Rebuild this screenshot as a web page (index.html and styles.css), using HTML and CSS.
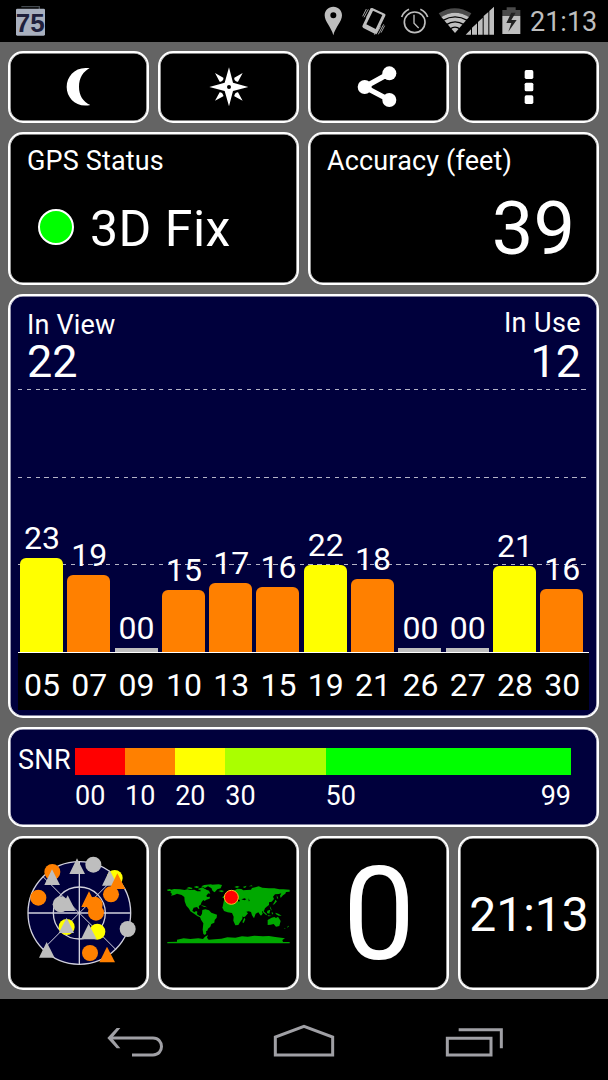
FILE: index.html
```
<!DOCTYPE html>
<html lang="en">
	<head>
		<meta charset="utf-8" />
		<meta name="viewport" content="width=device-width, initial-scale=1.0" />
		<title>GPS Status</title>
		<link rel="stylesheet" href="styles.css">
	</head>
	<body>
		<header class="statusbar">
			<svg class="battery-badge" viewBox="45 15 93 93">
				<path d="M64 20h54v8" fill="none" stroke="#444a50" stroke-width="4"/>
				<rect x="48" y="26" width="87" height="81" rx="4" fill="#a9b0bf"/>
				<text x="91" y="95">75</text>
			</svg>
			<div class="tray">
				<svg class="pin" viewBox="60 18 57 90"><path fill-rule="evenodd" d="M88 20c-15 0-26 11-26 26 0 19 20 36 26 60 6-24 26-41 26-60 0-15-11-26-26-26zm0 17a9 9 0 1 1 0 18 9 9 0 0 1 0-18z"/></svg>
				<svg class="vibrate" viewBox="171 18 78 90"><path fill-rule="evenodd" d="M205 24l37 17q4 2 2 6l-24 50q-3 6-8 4l-34-17q-5-3-2-8l23-48q2-5 6-4zm2 8l-20 41 28 14 20-42z"/><path class="line" d="M180 52l13-24M187 53l15-29M176 49l11-22M216 103l14-24M223 103l16-30M211 104l9-16M231 98l11-21" stroke-width="2.5"/></svg>
				<svg class="alarm" viewBox="291 18 84 90"><circle class="line" cx="332" cy="67" r="31" stroke-width="5"/><path class="line" d="M330 44v26l14 14" stroke-width="4"/><path class="line" d="M293 51q6-16 22-23M371 51q-6-16-22-23" stroke-width="5"/></svg>
				<svg class="network" viewBox="402 18 171 90">
					<path class="dim" d="M404 40q48-31 98 0l-7 11q-42-26-83 0z"/>
					<path d="M412 51q41-26 83 0l-42 48z"/>
					<path class="gap" d="M417 61q36-21 73 0M427 74q26-17 53 0M438 87q15-11 30 0" stroke-width="4"/>
					<path d="M481 108L573 19v89z" fill="#000"/>
					<path d="M485 104l16-16v16zM504 104V83l15-13v34zM522 104V66l14-13v51zM539 104V48l14-12v68zM556 104V33l14-13v84z"/>
				</svg>
				<svg class="battery" viewBox="594 18 57 90"><path class="dim" d="M608 22h27v8h14v18h-54V30h13z"/><path d="M595 48h54v54h-54z"/><path d="M622 38l-15 31h15l-9 26 25-35h-16l13-22z" fill="#222"/></svg>
				<span class="clock">21:13</span>
			</div>
		</header>

		<main class="board">
			<button class="tile tool"><svg viewBox="195 198 84 126"><path d="M269 205c-42-7-69 23-69 56s29 63 71 54c-22-10-34-29-34-55s13-46 32-55z"/></svg></button>
			<button class="tile tool"><svg viewBox="624 198 126 126"><path fill-rule="evenodd" d="M687 202l12 46 46 13-46 12-12 46-13-46-46-12 46-13zm0 53a6 6 0 1 0 0 12 6 6 0 0 0 0-12z"/><path d="M645 219l25 14q2 8-8 12h-3zM728 219l-25 14q-2 8 8 12h3zM645 302l14-25q8-1 11 9v3zM728 302l-14-25q-8-1-11 9v3z"/></svg></button>
			<button class="tile tool"><svg viewBox="160 198 126 126"><path class="arm" d="M254 220l-74 41 74 39"/><circle cx="254" cy="220" r="21"/><circle cx="180" cy="261" r="21"/><circle cx="254" cy="300" r="21"/></svg></button>
			<button class="tile tool"><svg viewBox="611 198 126 126"><rect x="661" y="210" width="26" height="27" rx="5"/><rect x="661" y="248" width="26" height="26" rx="5"/><rect x="661" y="286" width="26" height="26" rx="5"/></svg></button>

			<section class="tile half">
				<h2>GPS Status</h2>
				<p class="fix"><i class="led"></i>3D Fix</p>
			</section>
			<section class="tile half">
				<h2>Accuracy (feet)</h2>
				<p class="accuracy">39</p>
			</section>

			<section class="tile wide sky">
				<div class="counts">
					<div><h2>In View</h2><b>22</b></div>
					<div class="used"><h2>In Use</h2><b>12</b></div>
				</div>
				<div class="plot">
					<div class="sat"><span>23</span><i class="bar y" style="height:94px"></i></div>
					<div class="sat"><span>19</span><i class="bar o" style="height:77px"></i></div>
					<div class="sat"><span>00</span><i class="bar none" style="height:4px"></i></div>
					<div class="sat"><span>15</span><i class="bar o" style="height:62px"></i></div>
					<div class="sat"><span>17</span><i class="bar o" style="height:69px"></i></div>
					<div class="sat"><span>16</span><i class="bar o" style="height:65px"></i></div>
					<div class="sat"><span>22</span><i class="bar y" style="height:87px"></i></div>
					<div class="sat"><span>18</span><i class="bar o" style="height:73px"></i></div>
					<div class="sat"><span>00</span><i class="bar none" style="height:4px"></i></div>
					<div class="sat"><span>00</span><i class="bar none" style="height:4px"></i></div>
					<div class="sat"><span>21</span><i class="bar y" style="height:86px"></i></div>
					<div class="sat"><span>16</span><i class="bar o" style="height:63px"></i></div>
				</div>
				<div class="ids">
					<span>05</span><span>07</span><span>09</span><span>10</span><span>13</span><span>15</span><span>19</span><span>21</span><span>26</span><span>27</span><span>28</span><span>30</span>
				</div>
			</section>

			<section class="tile wide snr">
				<span class="name">SNR</span>
				<div class="scale">
					<div class="step r">00</div>
					<div class="step o">10</div>
					<div class="step y">20</div>
					<div class="step l">30</div>
					<div class="step g">50<span>99</span></div>
				</div>
			</section>

			<section class="tile widget">
				<svg class="radar" viewBox="-4 -6 420 450">
					<circle cx="207" cy="219" r="154" fill="#00003c"/>
					<g class="rings">
						<circle cx="207" cy="219" r="154"/><circle cx="207" cy="219" r="78"/>
						<path d="M98 110l218 218M98 328l218-218" stroke-width="3"/>
						<path d="M53 219h308M207 65v308"/>
					</g>
					<g class="o"><circle cx="126" cy="96" r="24"/><circle cx="84" cy="173" r="24"/></g>
					<path class="none" d="M200 55l24 47h-47zM125 88l24 47h-47z"/>
					<circle class="none" cx="249" cy="74" r="24"/>
					<circle class="y" cx="313" cy="114" r="24"/>
					<path class="none" d="M298 90l24 47h-47z"/>
					<g class="o"><circle cx="302" cy="163" r="24"/><path d="M321 100l24 47h-47zM236 154l24 47h-47z"/><circle cx="253" cy="194" r="24"/><circle cx="257" cy="218" r="24"/></g>
					<circle class="none" cx="151" cy="193" r="24"/><path class="none" d="M172 166l24 47h-47z"/>
					<circle class="y" cx="169" cy="261" r="24"/><path class="none" d="M169 233l22 46h-46z"/>
					<circle class="y" cx="261" cy="275" r="24"/><path class="none" d="M235 251l24 47h-47z"/>
					<circle class="none" cx="352" cy="267" r="24"/><path class="none" d="M109 306l24 47h-47z"/>
					<g class="o"><circle cx="239" cy="339" r="24"/><path d="M290 320l24 47h-47z"/></g>
				</svg>
			</section>
			<section class="tile widget">
				<svg class="world" viewBox="3 2 435 255">
					<!-- north america and greenland -->
					<path d="M36 58l8-2 5 2 8-2 18 1 14 2 8-2 9 2 12-1 9 5 10 0-2-9 7-3 12 8 6 10-6 7 2 4 9-1-1 6-10 3-5 4-4-3-5 6-3 8-6 4 2 9-3-1-4-5-10 2-4 9 6 5 5-4 4 2-1 8 8 5 7 1-2 4-11-4-13-9-9-6-4-8-8-9-5-13-1-13-8-6-14-4-8 4-10 2 3-5-5-5 2-4-10 0z"/>
					<path d="M94 54l8-4 11 3-4 4zM116 50l9-3 8 3-7 4zM128 56l8-3 5 3-7 3zM139 48l9-4 20-2 5 2-14 4-9 5zM158 47l12-4 21-1 10 2-4 10-10 3-8 9-6-4-4-9-5-2zM190 62l9-2 8 2-6 4zM148 56l14 5 4 9-7-1-8-6zM137 104l12 3 7 4-10-2z"/>
					<!-- south america -->
					<path d="M142 119l9-2 11 3 7 7 17 6-1 9-6 7-1 8-9 4-3 8-7 6-2 6-4 2 1 6-4 5-5-3-2-13 2-19-7-11-3-8 6-10z"/>
					<!-- europe and asia -->
					<path d="M207 90l12-1-1-7 8-7 9-3 0-10 12-7 12 1 6 4 9-1 14-1 3-5 10-2 10-3 11 4 20 2 16 0 15 3 12 0 19 1v6l-11 1-2 5-7 5-7 8-2-7 4-7-8 2-11 1-6 7 3 7-7 8-8 2 0 8-7 5-5 5-3 7-6 2 2 7-5 6-3-3-5-7-8 4-5 14-6-9-3-10-7-2-7 1 5 5-9 10-6 1-8-15-3-8-9-2-7 2-4-7-7-4-9 3-8 5-7 0z"/>
					<path d="M211 73l7 5-1 5-7 1zM205 77l4 2-3 5-4-2zM238 50l8-3 8 2-8 4zM263 50l12-4-5 7zM281 48l9-3 3 3zM365 75l5 9-4 1z"/>
					<path d="M361 88l5 5-8 9-5 1 5-7z"/>
					<!-- africa -->
					<path d="M210 99l9-5 15 0 5 5 13 1 7 11 5 9 11-1-4 9-8 8-1 10-7 10-5 8-9 1-6-14 1-12-5-11-13-2-11-4-4-9 2-8zM268 142l3 5-5 11-4-2z"/>
					<path d="M288 115l4 7-2 1zM320 114l8 11 8 7-2 3-10-9zM337 121l9-3-3 12-7-2zM350 125l5 3-4 5zM337 134l13 3-10 1zM344 106l4 8 3 7-5-6zM361 127l9 3 10 6-9 0-8-4z"/>
					<!-- australia -->
					<path d="M338 149l12-7 8-2 5 3 6-4 8 13-4 15-10 2-7-8-9 2-9 1zM399 166l3 2-6 5zM393 172l-4 4-3 0z"/>
					<!-- antarctica -->
					<path d="M37 215l29-1 0-6 20-4 20 2 24-2 14 2 6-7 9-5-3 8 5 6 18-1 20-2 18-4 24 1 20-4 17 1 20-3 26 2 18-1 19 3 29 4-8 5 2 6 20 0v4H37z"/>
					<path class="hole" d="M240 83h7l8 8-3 3-8-5zM259 87l10-3 5 3-6 3zM281 84l3 8-3 1z"/>
					<circle class="here" cx="229" cy="81" r="21"/>
				</svg>
			</section>
			<section class="tile widget heading">0</section>
			<section class="tile widget time">21:13</section>
		</main>

		<nav class="navbar">
			<svg class="back" viewBox="48 98 174 108"><path d="M60 143h129c34 0 34 51 0 51h-63"/><path class="head" d="M80 113h11l-25 30 25 31h-11l-28-31z"/></svg>
			<svg class="home" viewBox="546 98 192 108"><path d="M556 194v-54l86-32 86 32v54z"/></svg>
			<svg class="recent" viewBox="1063 98 183 108"><path d="M1073 144h131v50h-131zM1107 118h128v56"/></svg>
		</nav>
	</body>
</html>
```
FILE: styles.css
```
* { box-sizing: border-box; margin: 0; padding: 0; }
body { width: 608px; height: 1080px; overflow: hidden; background: #646464; color: #fff; font-family: Roboto, "Noto Sans", sans-serif; font-size: 27px; }
svg { display: block; flex: none; overflow: visible; }
h2 { font-size: 27px; font-weight: 400; line-height: 32px; letter-spacing: 0.15px; white-space: nowrap; }
i { display: block; }

/* status bar */
.statusbar { display: flex; justify-content: space-between; height: 42px; padding: 6px 10px 0 15px; background: #000; }
.battery-badge { width: 31px; height: 31px; margin-top: -1px; }
.battery-badge text { font-family: "Liberation Sans", sans-serif; font-size: 78px; font-weight: 700; fill: #20203c; text-anchor: middle; }
.tray { display: flex; fill: #bebebe; }
.tray svg { height: 30px; }
.tray .line { fill: none; stroke: #bebebe; }
.tray .gap { fill: none; stroke: #000; }
.tray .dim { fill: #4a4a4a; }
.pin { width: 19px; }
.vibrate { width: 26px; margin-left: 18px; }
.alarm { width: 28px; margin-left: 14px; }
.network { width: 57px; margin-left: 9px; }
.battery { width: 19px; margin-left: 7px; }
.clock { width: 68px; margin-left: 9px; color: #bebebe; line-height: 32px; }

/* tiles */
.board { display: grid; grid-template-columns: repeat(4, 141px); grid-template-rows: 72px 153px 424px 100px 154px; gap: 9px; height: 957px; padding: 9px 9px 8px 8px; }
.tile { border: 2px solid #fff; border-radius: 15px; box-shadow: inset 0 0 0 0.6px #fff; background: #000; color: #fff; font-family: inherit; overflow: hidden; }
.half { grid-column: span 2; padding: 11px 17px 0; }
.wide { grid-column: span 4; background: #00003c; }
.tool { display: flex; align-items: center; justify-content: center; }
.tool svg { height: 42px; fill: #fff; }
.arm { fill: none; stroke: #fff; stroke-width: 16; }

.fix { display: flex; align-items: center; padding: 22px 0 0 11px; font-size: 50px; line-height: 60px; letter-spacing: 0.5px; }
.led { width: 36px; height: 36px; margin: -5px 16px 0 0; border: 2px solid #fff; border-radius: 50%; background: #0f0; }
.accuracy { padding: 9px 5px 0 0; font-size: 74px; line-height: 86px; text-align: right; }

/* satellites */
.sky { padding: 12px 8px 0; }
.counts { display: flex; justify-content: space-between; height: 81px; padding: 0 8px 0 9px; }
.counts b { display: block; font-size: 45px; font-weight: 400; line-height: 44px; }
.counts div { padding-top: 1px; }
.counts b { margin-top: -1px; }
.used { text-align: right; }
.used h2 { margin-top: -2px; margin-bottom: 2px; letter-spacing: 0.4px; }
.plot, .ids { display: grid; grid-template-columns: repeat(12, 43px); column-gap: 4.3px; padding-left: 2px; }
.plot { height: 264px; border-bottom: 1px solid #fff; --dash: repeating-linear-gradient(90deg, #b4b4c6 0 4.4px, transparent 4.4px 8.8px); background: var(--dash) 0 0 / 570px 1px no-repeat, var(--dash) 0 88px / 570px 1px no-repeat, var(--dash) 0 175px / 570px 1px no-repeat; }
.sat { display: flex; flex-direction: column; justify-content: flex-end; text-align: center; }
.sat span { font-size: 32px; line-height: 36px; margin-bottom: 2px; padding-left: 1px; }
.bar { border-radius: 6px 6px 0 0; }
.ids { height: 57px; background: #000; font-size: 32px; line-height: 65px; text-align: center; }
.ids span { padding-left: 1px; }
.bar.none { border-radius: 0; }
.bar.y { background: #ff0; }
.bar.o { background: #ff8000; }
.bar.none { background: #bebebe; }

/* signal scale */
.snr { display: flex; padding: 19px 26px 0 7px; }
.name { width: 58px; line-height: 25px; padding-left: 1px; letter-spacing: 0.3px; }
.scale { display: grid; flex: 1; grid-template-columns: 10fr 10fr 10fr 20fr 49fr; }
.step { position: relative; display: flex; justify-content: space-between; height: 74px; padding-top: 31px; line-height: 35px; background-size: 100% 27px; background-repeat: no-repeat; }
.step.r { background-image: linear-gradient(#f00, #f00); }
.step.o { background-image: linear-gradient(#ff8000, #ff8000); }
.step.y { background-image: linear-gradient(#ff0, #ff0); }
.step.l { background-image: linear-gradient(#af0, #af0); }
.step.g { background-image: linear-gradient(#0f0, #0f0); }

/* widgets */
.widget { display: flex; align-items: center; justify-content: center; }
.radar { width: 140px; height: 150px; }
.radar .o { fill: #ff8000; }
.radar .y { fill: #ff0; }
.radar .none { fill: #bebebe; }
.rings { fill: none; stroke: #d0d0dc; stroke-width: 4; }
.world { width: 145px; height: 85px; fill: #00a800; }
.hole { fill: #000; }
.here { fill: #f00; stroke: #ffc020; stroke-width: 3; }
.heading { padding: 2px 0 0 1px; font-size: 129px; }
.time { padding: 2px 0 0 1px; font-size: 48px; }

/* navigation bar */
.navbar { display: flex; justify-content: space-between; height: 81px; padding: 24px 103px 0 106px; background: #000; }
.navbar svg { height: 36px; fill: none; stroke: #a0a0a5; stroke-width: 9; }
.navbar .head { fill: #a0a0a5; stroke: none; }
.back { width: 58px; }
.home { width: 64px; }
.recent { width: 61px; }
```
